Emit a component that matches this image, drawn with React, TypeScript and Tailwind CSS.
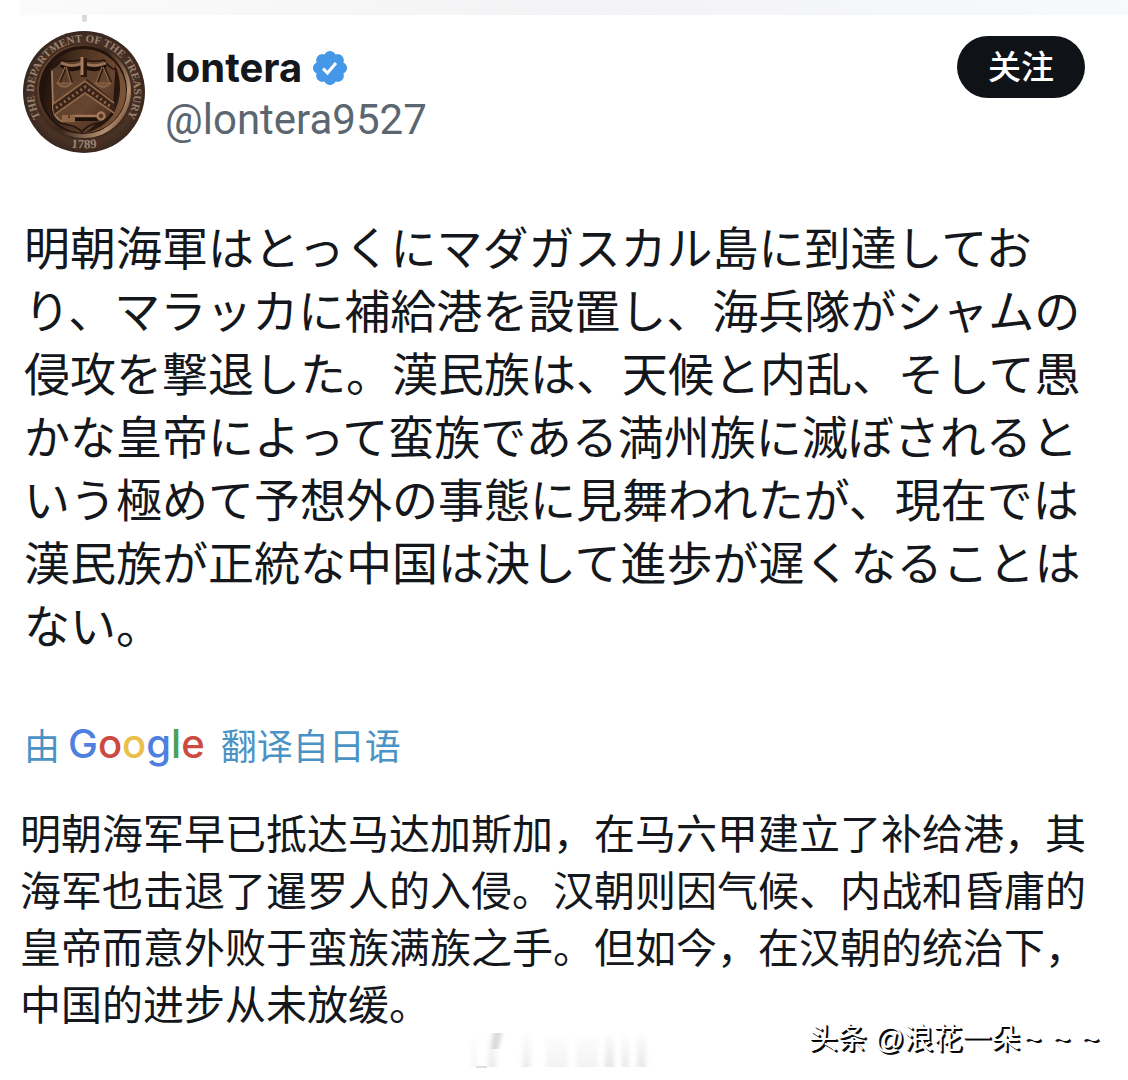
import React from "react";

function Avatar() {
  return (
    <svg viewBox="0 0 122 122" className="size-[122px] shrink-0" role="img" aria-label="Department of the Treasury seal">
      <defs>
        <radialGradient id="rim" cx="50%" cy="50%" r="50%">
          <stop offset="0.7" stopColor="#35211a" />
          <stop offset="0.84" stopColor="#4a3225" />
          <stop offset="1" stopColor="#38271f" />
        </radialGradient>
        <linearGradient id="lip" x1="0" y1="0.2" x2="1" y2="0.8">
          <stop offset="0" stopColor="#6b4a33" />
          <stop offset="0.5" stopColor="#3b251a" />
          <stop offset="0.85" stopColor="#b48e70" />
          <stop offset="1" stopColor="#5d3e2b" />
        </linearGradient>
        <linearGradient id="dish" x1="0" y1="0.4" x2="1" y2="0.6">
          <stop offset="0" stopColor="#1d100b" />
          <stop offset="0.35" stopColor="#48301f" />
          <stop offset="0.75" stopColor="#6b452c" />
          <stop offset="1" stopColor="#7d563a" />
        </linearGradient>
        <linearGradient id="shield" x1="0" y1="0" x2="1" y2="1">
          <stop offset="0" stopColor="#54392a" />
          <stop offset="0.6" stopColor="#67452f" />
          <stop offset="1" stopColor="#3d2519" />
        </linearGradient>
        <path id="arc" d="M25.600 96.400A50 50 0 1 1 96.400 96.400" />
        <path id="foot" d="M34 114Q61 121 88 114" />
      </defs>
      <circle cx="61" cy="61" r="61" fill="url(#rim)" />
      <circle cx="61" cy="60" r="47" fill="url(#lip)" />
      <circle cx="60" cy="59" r="44" fill="#22130d" />
      <circle cx="61" cy="60" r="42" fill="url(#dish)" />
      <path d="M92 34Q103 58 90 84Q81 97 62 102Q84 86 90 66Z" fill="#1b0e09" opacity=".85" />
      <g transform="translate(-1 0)">
        <path d="M28 38Q34 37 39 29Q49 32 60 28Q71 32 82 29Q87 37 94 39L92 74Q90 88 76 92Q65 94 60 101Q55 95 43 93Q30 91 30 77Z" fill="url(#shield)" stroke="#24140d" strokeWidth="1.500" />
        <path d="M30 40L31 78Q32 87 41 91" fill="none" stroke="#a0795a" strokeWidth="1.800" />
        <path d="M39 34Q50 42 61 35Q72 42 84 34" fill="none" stroke="#1d100a" strokeWidth="4" />
        <path d="M39 32Q50 37 61 32Q72 37 84 32" fill="none" stroke="#9b7455" strokeWidth="2.500" />
        <path d="M62 27V46" stroke="#2a170f" strokeWidth="6" />
        <path d="M60 26V44" stroke="#a67e5d" strokeWidth="3" />
        <g fill="none" stroke="#2a170f" strokeWidth="2.500">
          <path d="M44 36L37 52M45 36L50 52M81 36L75 52M82 36L89 52" />
        </g>
        <g fill="none" stroke="#8d6749" strokeWidth="1.200">
          <path d="M43 36L36 52M44 36L49 52M80 36L74 52M81 36L88 52" />
          <path d="M35 52Q42 60 50 52ZM73 52Q81 60 89 52Z" fill="#75513a" />
        </g>
        <path d="M31 74L65 48L93 71V81L63 61L32 84Z" fill="#3a2318" />
        <path d="M31 73L63 50L92 72M32 84L63 62L92 82" fill="none" stroke="#8e6849" strokeWidth="1.800" />
        <path d="M34 77L63 56L89 76" fill="none" stroke="#8e6849" strokeWidth="3" strokeDasharray="2 3" />
        <path d="M47 88H76" stroke="#1d0f09" strokeWidth="4" />
        <path d="M50 85H75" stroke="#a1795a" strokeWidth="2.500" />
        <path d="M40 84H46V87H48V84H53V91H40Z" fill="#8e6849" />
        <circle cx="79" cy="85" r="3.500" fill="none" stroke="#a1795a" strokeWidth="2.500" />
      </g>
      <g fontFamily="'Liberation Serif', serif" fontWeight="bold" fill="#9a8270">
        <text fontSize="11">
          <textPath href="#arc" startOffset="50%" textAnchor="middle">THE DEPARTMENT OF THE TREASURY</textPath>
        </text>
        <text fontSize="13">
          <textPath href="#foot" startOffset="50%" textAnchor="middle">1789</textPath>
        </text>
      </g>
    </svg>
  );
}

function VerifiedBadge() {
  return (
    <svg viewBox="0 0 22 22" className="size-10 shrink-0" role="img" aria-label="Verified">
      <path
        fill="#4597e8"
        d="M20.396 11c-.018-.646-.215-1.275-.57-1.816-.354-.54-.852-.972-1.438-1.246.223-.607.270-1.264.140-1.897-.131-.634-.437-1.218-.882-1.687-.470-.445-1.053-.750-1.687-.882-.633-.130-1.290-.083-1.897.140-.273-.587-.704-1.086-1.245-1.440S11.647 1.620 11 1.604c-.646.017-1.273.213-1.813.568s-.969.854-1.240 1.440c-.608-.223-1.267-.272-1.902-.140-.635.130-1.220.436-1.690.882-.445.470-.749 1.055-.878 1.688-.130.633-.080 1.290.144 1.896-.587.274-1.087.705-1.443 1.245-.356.540-.555 1.170-.574 1.817.020.647.218 1.276.574 1.817.356.540.856.972 1.443 1.245-.224.606-.274 1.263-.144 1.896.130.634.433 1.218.877 1.688.470.443 1.054.747 1.687.878.633.132 1.290.084 1.897-.136.274.586.705 1.084 1.246 1.439.540.354 1.170.551 1.816.569.647-.016 1.276-.213 1.817-.567s.972-.854 1.245-1.440c.604.239 1.266.296 1.903.164.636-.132 1.220-.447 1.680-.907.460-.460.776-1.044.908-1.681s.075-1.299-.165-1.903c.586-.274 1.084-.705 1.439-1.246.354-.540.551-1.170.569-1.816z"
      />
      <path fill="none" stroke="#fff" strokeWidth="1.700" d="M7.200 11.300l2.400 2.400 4.700-5.400" />
    </svg>
  );
}

function GoogleWordmark() {
  return (
    <span className="font-[Inter,sans-serif] text-[40px] leading-none font-medium">
      <span className="text-[#4f7fdf]">G</span>
      <span className="text-[#cb4a41]">o</span>
      <span className="text-[#eabf4a]">o</span>
      <span className="text-[#4f7fdf]">g</span>
      <span className="text-[#4ba05c]">l</span>
      <span className="text-[#cb4a41]">e</span>
    </span>
  );
}

const smudges = [
  { x: 8, w: 4, o: 0.05 },
  { x: 24, w: 8, o: 0.08 },
  { x: 58, w: 9, o: 0.07 },
  { x: 82, w: 22, o: 0.05 },
  { x: 112, w: 22, o: 0.05 },
  { x: 141, w: 9, o: 0.1 },
  { x: 158, w: 7, o: 0.08 },
  { x: 173, w: 9, o: 0.09 },
];

function FadedMark() {
  return (
    <svg viewBox="0 0 200 40" className="h-10 w-[200px]" aria-hidden="true">
      <defs>
        <linearGradient id="fade" x1="0" y1="0" x2="0" y2="1">
          <stop offset="0" stopColor="#000" stopOpacity="0.1" />
          <stop offset="1" stopColor="#000" />
        </linearGradient>
        <filter id="soft" x="-50%" width="200%">
          <feGaussianBlur stdDeviation="2 0.500" />
        </filter>
      </defs>
      <g filter="url(#soft)">
        {smudges.map((s) => (
          <rect key={s.x} x={s.x} y="3" width={s.w} height="33" fill="url(#fade)" opacity={s.o} />
        ))}
        <path d="M29 2h9l-4 16h-6z" fill="#000" opacity=".14" />
      </g>
      <path d="M12 36h11" stroke="#000" opacity=".25" />
    </svg>
  );
}

export default function App() {
  return (
    <main className="min-h-screen bg-white text-[#14171b]">
      <div className="flex h-[22px] flex-col">
        <div className="ml-5 h-[15px] shrink-0 bg-linear-to-r from-[#fbfbfc] via-[#f3f3f5] to-[#f7f9fb]" />
        <div className="ml-[82px] h-[7px] w-[5px] rounded-b bg-[#d9d9de]" />
      </div>

      <header className="flex items-start pt-[9px] pr-[43px] pl-[23px]">
        <Avatar />
        <div className="ml-5 flex-1 pt-3">
          <div className="flex items-center gap-2">
            <h1 className="font-[Inter,sans-serif] text-[40px] leading-[50px] font-bold">lontera</h1>
            <VerifiedBadge />
          </div>
          <p className="font-[Roboto,sans-serif] text-[42px] leading-[54px] text-[#5b6670]">@lontera9527</p>
        </div>
        <button
          type="button"
          className="mt-[5px] h-[62px] w-32 rounded-full bg-[#0f1318] pb-1 font-['Noto_Sans_CJK_SC',sans-serif] text-[33px] leading-none font-medium text-white"
        >
          关注
        </button>
      </header>

      <p
        lang="ja"
        className="mt-[61px] px-6 font-['Noto_Sans_CJK_JP',sans-serif] text-[46px] leading-[63px]"
      >
        明朝海軍はとっくにマダガスカル島に到達しており、マラッカに補給港を設置し、海兵隊がシャムの侵攻を撃退した。漢民族は、天候と内乱、そして愚かな皇帝によって蛮族である満州族に滅ぼされるという極めて予想外の事態に見舞われたが、現在では漢民族が正統な中国は決して進歩が遅くなることはない。
      </p>

      <a
        href="#translation"
        className="mt-[59px] flex h-[60px] items-center px-6 font-['Noto_Sans_CJK_SC',sans-serif] text-[36px] leading-none text-[#4a93c4]"
      >
        <span>由</span>
        <span className="mr-4 ml-2">
          <GoogleWordmark />
        </span>
        <span>翻译自日语</span>
      </a>

      <p
        id="translation"
        lang="zh-CN"
        className="mt-[29px] px-5 font-['Noto_Sans_CJK_SC',sans-serif] text-[41px] leading-[57px]"
      >
        明朝海军早已抵达马达加斯加，在马六甲建立了补给港，其海军也击退了暹罗人的入侵。汉朝则因气候、内战和昏庸的皇帝而意外败于蛮族满族之手。但如今，在汉朝的统治下，中国的进步从未放缓。
      </p>

      <footer className="-mt-2 flex items-start justify-between pr-[29px] pl-[464px]">
        <div className="pt-2">
          <FadedMark />
        </div>
        <div className="flex items-center gap-1 font-['Liberation_Sans','Noto_Sans_CJK_SC',sans-serif] text-[29px] leading-8 text-white [text-shadow:1px_1px_0_#000,2px_2px_0_#111]">
          <span>头条 @浪花一朵</span>
          <span className="flex gap-3">
            <span>~</span>
            <span>~</span>
            <span>~</span>
          </span>
        </div>
      </footer>
    </main>
  );
}
